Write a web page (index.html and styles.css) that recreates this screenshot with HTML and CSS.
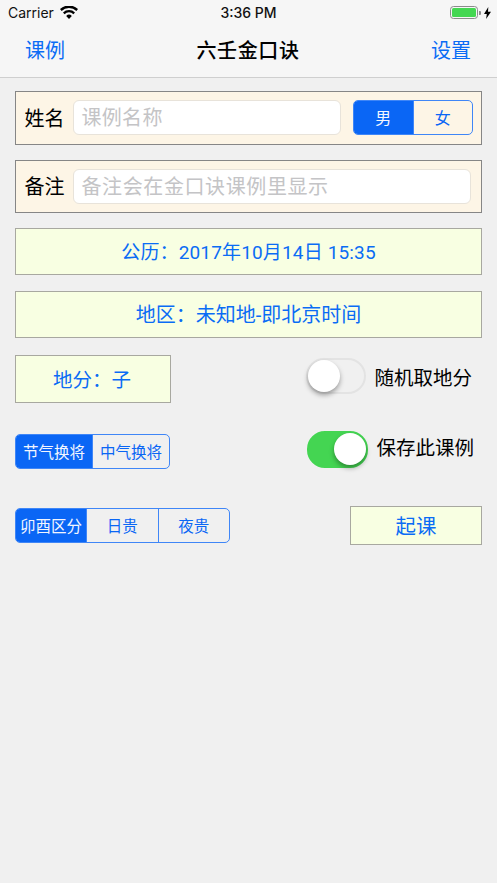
FILE: index.html
```html
<!DOCTYPE html>
<html lang="zh">
<head>
<meta charset="utf-8">
<title>六壬金口诀</title>
<link rel="stylesheet" href="styles.css">
</head>
<body>
<header class="top">
  <div class="status">
    <div class="status-left">
      <span>Carrier</span>
      <svg class="wifi" viewBox="0 0 18 13" width="18" height="13"><path d="M9 13 6.2 9.9a4 4 0 0 1 5.6 0Z"/><path d="M4.6 8.2 3 6.4a8.6 8.6 0 0 1 12 0l-1.6 1.8a6.2 6.2 0 0 0-8.8 0Z"/><path d="M1.6 4.9 0 3.1a13 13 0 0 1 18 0l-1.6 1.8a10.700 10.700 0 0 0-14.800 0Z"/></svg>
    </div>
    <span class="time">3:36 PM</span>
    <div class="status-right">
      <span class="battery"><span class="battery-fill"></span></span>
      <span class="battery-tip"></span>
      <svg class="bolt" viewBox="0 0 7 12" width="7" height="12"><path d="M4.300 0 0 6.900h2.800L2.100 12 7 4.800H4Z"/></svg>
    </div>
  </div>
  <nav class="nav">
    <span class="nav-link">课例</span>
    <span class="nav-title">六壬金口诀</span>
    <span class="nav-link">设置</span>
  </nav>
</header>
<main class="content">
  <section class="panel panel-name">
    <span class="panel-label">姓名</span>
    <div class="field field-name">课例名称</div>
    <div class="seg seg-gender">
      <span class="seg-item on">男</span>
      <span class="seg-item">女</span>
    </div>
  </section>
  <section class="panel panel-note">
    <span class="panel-label">备注</span>
    <div class="field field-note">备注会在金口诀课例里显示</div>
  </section>
  <div class="bar bar-date">公历：2017年10月14日 15:35</div>
  <div class="bar bar-area">地区：未知地-即北京时间</div>
  <div class="row row-branch">
    <div class="bar bar-branch">地分：子</div>
    <div class="switch-group group-random">
      <span class="switch"><span class="knob"></span></span>
      <span class="switch-label">随机取地分</span>
    </div>
  </div>
  <div class="row row-term">
    <div class="seg seg-term">
      <span class="seg-item on">节气换将</span>
      <span class="seg-item">中气换将</span>
    </div>
    <div class="switch-group group-save">
      <span class="switch is-on"><span class="knob"></span></span>
      <span class="switch-label">保存此课例</span>
    </div>
  </div>
  <div class="row row-action">
    <div class="seg seg-noble">
      <span class="seg-item on first">卯酉区分</span>
      <span class="seg-item">日贵</span>
      <span class="seg-item">夜贵</span>
    </div>
    <div class="bar bar-start">起课</div>
  </div>
</main>
</body>
</html>
```
FILE: styles.css
```css
* { box-sizing: border-box; }
html, body { margin: 0; height: 100%; }
body {
  background: #f0f0f0;
  color: #000;
  font-family: "Inter", "Noto Sans CJK SC", sans-serif;
  overflow: hidden;
}
.top {
  height: 78px;
  background: #f6f6f6;
  border-bottom: 1px solid #cfcfcf;
}
.status {
  height: 25px;
  padding: 0 8px;
  display: grid;
  grid-template-columns: 1fr auto 1fr;
  align-items: center;
  font-size: 14px;
  color: #111;
}
.status-left { display: flex; align-items: center; gap: 6px; }
.wifi { fill: #000; margin-top: -1px; }
.time { font-weight: 500; font-size: 14px; }
.status-right { display: flex; align-items: center; justify-content: flex-end; margin-right: -2px; }
.battery {
  width: 28px; height: 13px;
  border: 1px solid #8b8b8b;
  border-radius: 3.5px;
  padding: 1px;
  display: block;
}
.battery-fill { display: block; height: 100%; background: #44d752; border-radius: 1.5px; }
.battery-tip { width: 2px; height: 4px; background: #8b8b8b; border-radius: 0 1px 1px 0; margin-left: 1px; }
.bolt { fill: #000; margin-left: 3px; }
.nav {
  height: 52px;
  padding: 0 26px 3px 25px;
  display: flex;
  justify-content: space-between;
  align-items: center;
  font-family: "Noto Sans CJK SC", sans-serif;
}
.nav-link { color: #0a6cf5; font-size: 20px; }
.nav-title { font-size: 20px; font-weight: 500; letter-spacing: 0.6px; }

.content {
  padding: 13px 15px 0;
  display: flex;
  flex-direction: column;
  font-family: "Noto Sans CJK SC", sans-serif;
}
.panel {
  height: 54px;
  background: #fdf5e6;
  border: 1.5px solid #868686;
  display: flex;
  align-items: center;
  padding: 0 8px 1px 8.5px;
}
.panel-note { margin-top: 15px; height: 53px; }
.panel-label { font-size: 20px; width: 48px; flex: none; padding-bottom: 1px; }
.field {
  height: 35px;
  background: #fff;
  border: 1px solid #e8e3da;
  border-radius: 6px;
  color: #c4c4c6;
  font-size: 20px;
  line-height: 31px;
  padding-left: 8px;
}
.field-name { width: 269px; letter-spacing: 0.3px; }
.field-note { width: 398px; letter-spacing: 0.6px; }
.seg {
  display: flex;
  border: 1.5px solid #3f86f7;
  border-radius: 5px;
  overflow: hidden;
  color: #0a66f5;
}
.seg-item {
  display: flex;
  align-items: center;
  justify-content: center;
  border-left: 1.5px solid #3f86f7;
  padding-bottom: 1px;
}
.seg-item:first-child { border-left: 0; }
.seg-item.on { background: #0a66f5; color: #f2f6ff; }
.seg-gender { width: 120px; height: 35px; margin-left: 12px; font-size: 16px; }
.seg-gender .seg-item { flex: 1; }
.bar {
  background: #f8ffe2;
  border: 1.5px solid #a8a8a0;
  color: #0a6cf5;
  display: flex;
  align-items: center;
  justify-content: center;
  font-family: "Roboto", "Noto Sans CJK SC", sans-serif;
  font-size: 20px;
  height: 47px;
  padding-bottom: 2px;
}
.bar-date { margin-top: 15px; font-size: 19px; letter-spacing: 0.15px; }
.bar-area { margin-top: 16px; }
.row { display: flex; align-items: center; justify-content: space-between; }
.row-branch { margin-top: 17px; height: 48px; }
.bar-branch { width: 156px; height: 48px; font-size: 19.5px; padding-right: 2px; }
.switch-group { display: flex; align-items: center; }
.switch-label { font-size: 19.5px; }
.group-random { gap: 8px; margin-right: 10px; margin-top: -6px; }
.group-save { gap: 8px; margin-right: 8px; margin-top: -4px; }
.group-save .switch-label { margin-bottom: 6px; }
.switch {
  width: 60px;
  height: 36px;
  border-radius: 18px;
  border: 2px solid #e3e3e3;
  background: #f0f0f0;
  position: relative;
  display: block;
}
.knob {
  position: absolute;
  left: 0;
  top: 0;
  width: 32px;
  height: 32px;
  border-radius: 50%;
  background: #fff;
  box-shadow: 0 3px 5px rgba(0,0,0,.35);
}
.switch.is-on { background: #44d552; border-color: #44d552; width: 61px; height: 37px; }
.is-on .knob { left: 25px; }
.row-term { margin-top: 31px; height: 35px; }
.seg-term { width: 155px; height: 35px; font-size: 15.5px; }
.seg-term .seg-item { flex: none; width: 76px; }
.seg-term .seg-item + .seg-item { flex: 1; }
.row-action { margin-top: 37px; height: 39px; }
.seg-noble { width: 215px; height: 35px; font-size: 15.5px; }
.seg-noble .seg-item { flex: 1; }
.seg-noble .first { flex: none; width: 70px; }
.bar-start { width: 132px; height: 39px; font-size: 20.5px; }
```
